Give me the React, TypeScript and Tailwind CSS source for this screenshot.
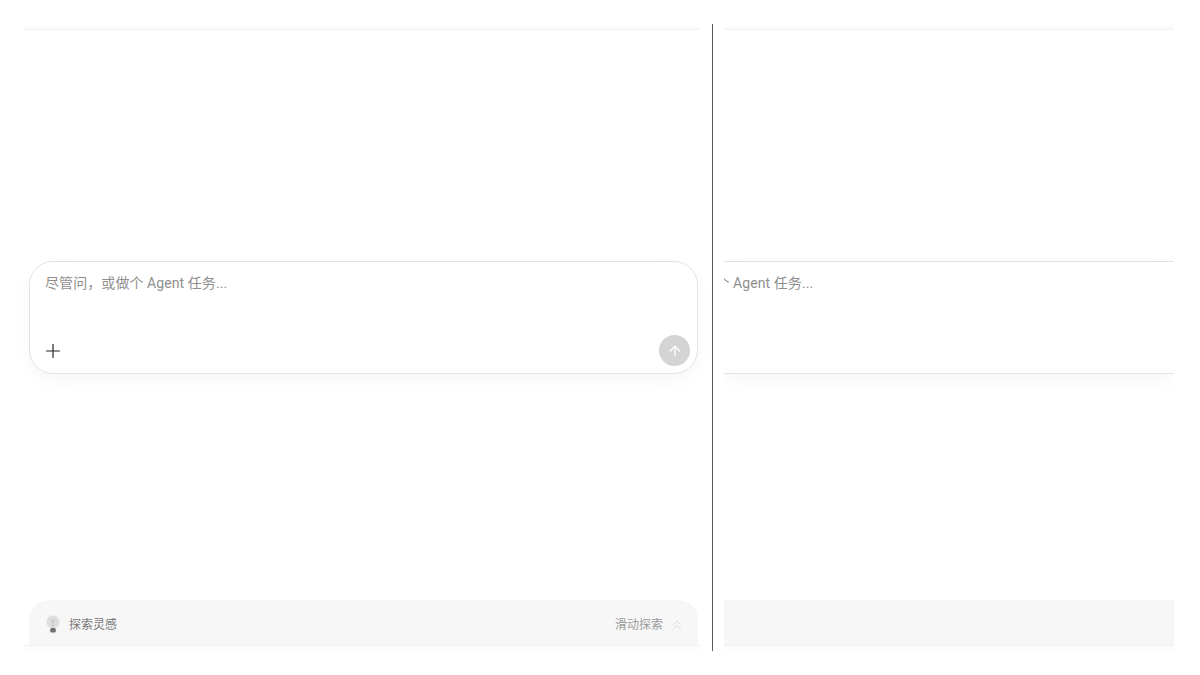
import React from 'react';
import { ArrowUp, ChevronsUp, Plus } from 'lucide-react';

const FONT = "font-['Roboto','Noto_Sans_CJK_SC',sans-serif]";

const Bulb = () => (
  <svg width="14" height="18" viewBox="0 0 14 18" fill="none" className="-mt-[2px]">
    <path d="M7 0.5a6.5 6.5 0 0 1 3.6 11.9V13H3.4v-.6A6.5 6.5 0 0 1 7 0.5Z" fill="#dedede" />
    <path d="M7 12V6M4.8 4.5 7 6.5l2.2-2" stroke="#b5b5b5" strokeWidth="0.8" />
    <rect x="4.2" y="13" width="5.6" height="4.5" rx="1.6" fill="#6f6f6f" />
  </svg>
);

const TopStrip = () => <div className="h-[6px] shrink-0 border-b border-[#f0f0f0] bg-gradient-to-b from-white to-[#f9f9f9]" />;

const BottomStrip = () => <div className="h-[5px] shrink-0 border-t border-[#f1f1f1] bg-[#fcfcfc]" />;

export default function App() {
  return (
    <div className={`flex h-[675px] w-[1200px] bg-white p-6 ${FONT}`}>
      {/* left pane */}
      <div className="flex h-[626px] w-[676px] shrink-0 flex-col">
        <TopStrip />
        <div className="flex flex-1 flex-col pl-[5px] pr-[2px]">
          <div className="mt-[231px] flex h-[113px] flex-col justify-between rounded-[24px] border border-[#e3e3e3] bg-white pb-[7px] pl-[15px] pr-[7px] pt-[11px] shadow-[0_6px_16px_rgba(0,0,0,0.035)]">
            <div className="text-[14px] leading-[20px] tracking-[0.08px] text-[#8f8f8f]">尽管问，或做个 Agent 任务...</div>
            <div className="flex items-center justify-between">
              <Plus size={22} strokeWidth={1.3} className="-ml-[3px] text-[#222]" />
              <div className="flex h-[31px] w-[31px] items-center justify-center rounded-full bg-[#d4d4d4]">
                <ArrowUp size={16} strokeWidth={2} className="text-white" />
              </div>
            </div>
          </div>
          <div className="mt-auto flex h-[45px] items-center justify-between rounded-t-[20px] bg-[#f7f7f7] pl-[17px] pr-[13px] pt-[5px]">
            <div className="flex items-center gap-[9px]">
              <Bulb />
              <span className="text-[12px] text-[#777]">探索灵感</span>
            </div>
            <div className="flex items-center gap-[6px]">
              <span className="text-[12px] text-[#9a9a9a]">滑动探索</span>
              <ChevronsUp size={16} strokeWidth={1.1} className="text-[#d4d4d4]" />
            </div>
          </div>
        </div>
        <BottomStrip />
      </div>

      {/* divider */}
      <div className="ml-[12px] mr-[11px] h-[627px] w-px shrink-0 bg-[#5c5c5c]" />

      {/* right pane */}
      <div className="flex h-[626px] w-[450px] shrink-0 flex-col overflow-hidden">
        <TopStrip />
        <div className="flex flex-1 flex-col">
          <div className="mt-[231px] h-[113px] overflow-hidden border-y border-[#e3e3e3] bg-white pt-[11px] shadow-[0_6px_16px_rgba(0,0,0,0.035)]">
            <div className="ml-[-93px] whitespace-nowrap text-[14px] leading-[20px] tracking-[0.08px] text-[#8f8f8f]">尽管问，或做个 Agent 任务...</div>
          </div>
          <div className="mt-auto h-[45px] bg-[#f7f7f7]" />
        </div>
        <BottomStrip />
      </div>
    </div>
  );
}
